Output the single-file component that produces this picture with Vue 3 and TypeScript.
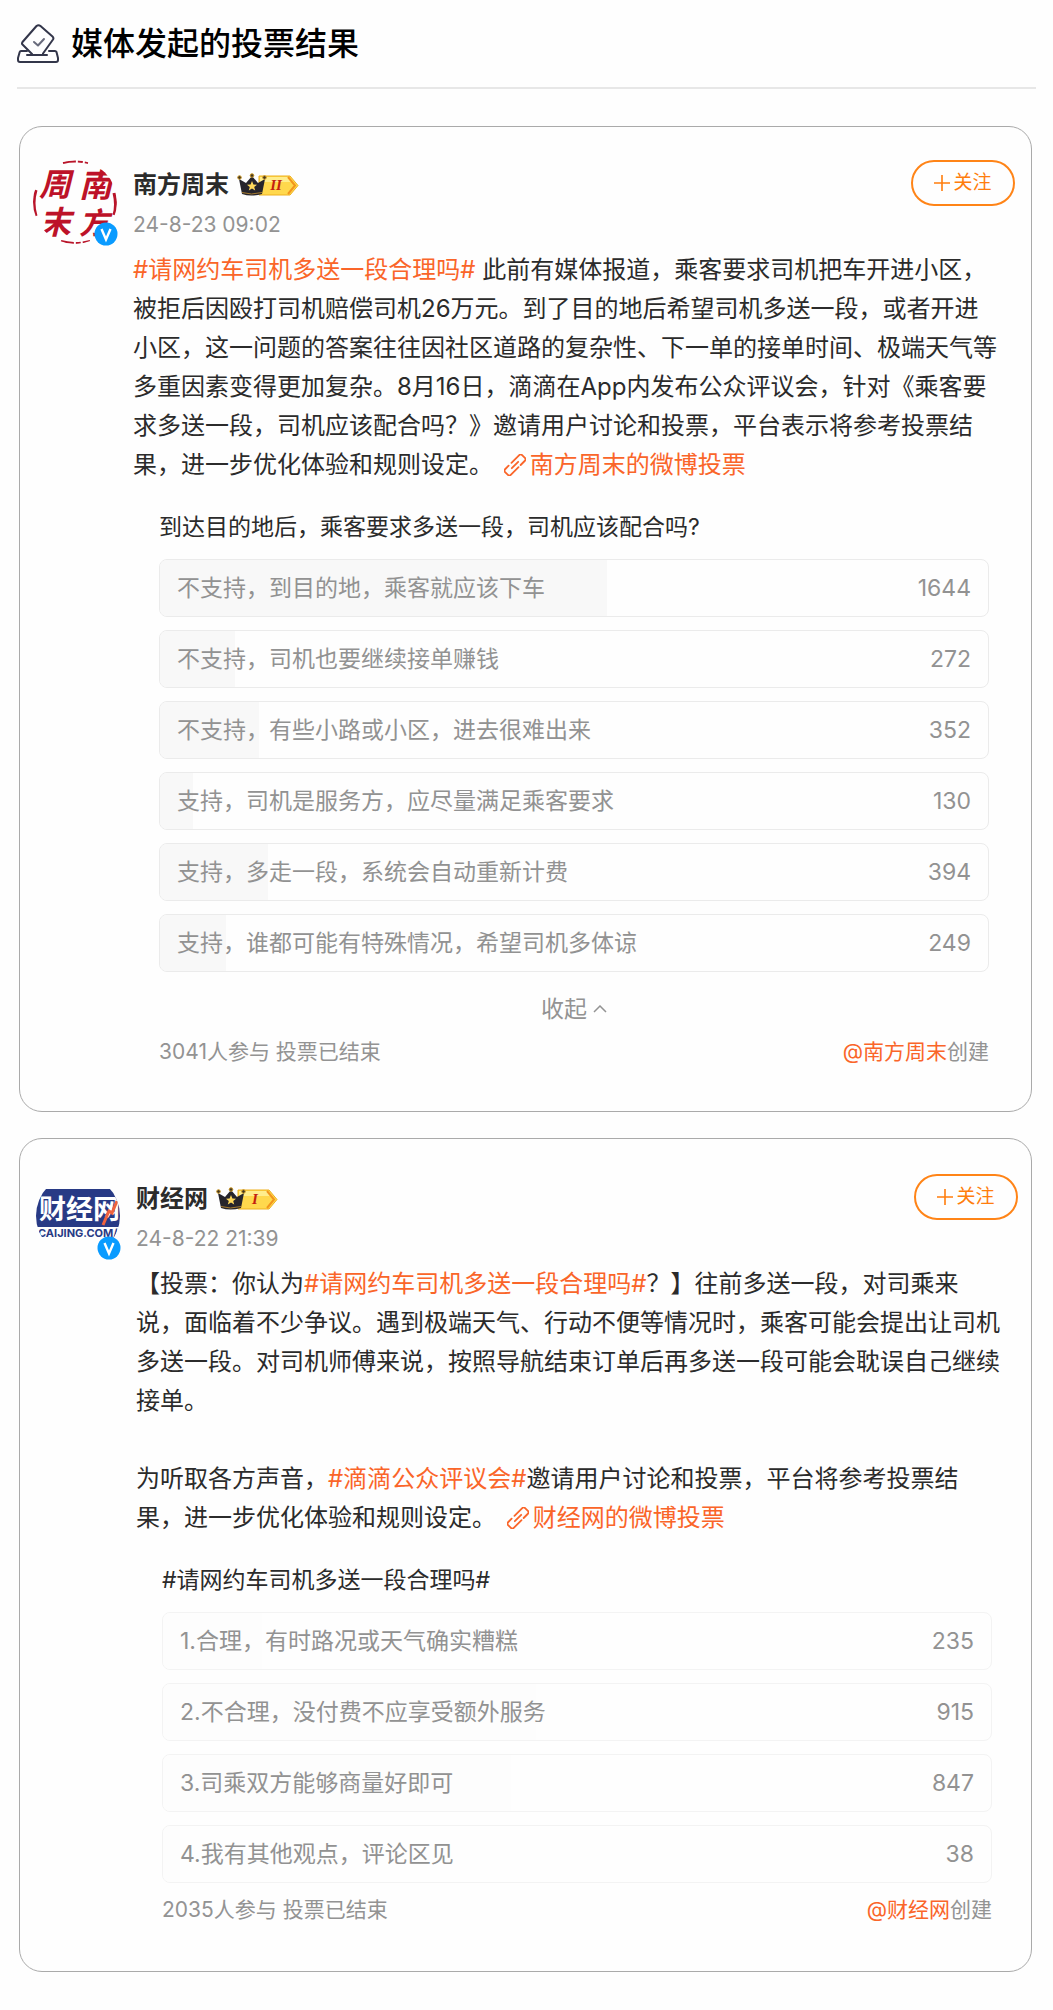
<script setup lang="ts">
interface Segment {
  text: string
  kind?: 'topic' | 'vote'
}
interface Option {
  label: string
  votes: number
}
interface Post {
  id: string
  author: string
  level: string
  time: string
  body: Segment[]
  question: string
  options: Option[]
  total: number
  collapsible: boolean
}

const posts: Post[] = [
  {
    id: 'nfzm',
    author: '南方周末',
    level: 'II',
    time: '24-8-23 09:02',
    body: [
      { text: '#请网约车司机多送一段合理吗#', kind: 'topic' },
      {
        text: ' 此前有媒体报道，乘客要求司机把车开进小区，\n被拒后因殴打司机赔偿司机26万元。到了目的地后希望司机多送一段，或者开进\n小区，这一问题的答案往往因社区道路的复杂性、下一单的接单时间、极端天气等\n多重因素变得更加复杂。8月16日，滴滴在App内发布公众评议会，针对《乘客要\n求多送一段，司机应该配合吗？》邀请用户讨论和投票，平台表示将参考投票结\n果，进一步优化体验和规则设定。 ',
      },
      { text: '南方周末的微博投票', kind: 'vote' },
    ],
    question: '到达目的地后，乘客要求多送一段，司机应该配合吗?',
    options: [
      { label: '不支持，到目的地，乘客就应该下车', votes: 1644 },
      { label: '不支持，司机也要继续接单赚钱', votes: 272 },
      { label: '不支持，有些小路或小区，进去很难出来', votes: 352 },
      { label: '支持，司机是服务方，应尽量满足乘客要求', votes: 130 },
      { label: '支持，多走一段，系统会自动重新计费', votes: 394 },
      { label: '支持，谁都可能有特殊情况，希望司机多体谅', votes: 249 },
    ],
    total: 3041,
    collapsible: true,
  },
  {
    id: 'caijing',
    author: '财经网',
    level: 'I',
    time: '24-8-22 21:39',
    body: [
      { text: '【投票：你认为' },
      { text: '#请网约车司机多送一段合理吗#', kind: 'topic' },
      {
        text: '？】往前多送一段，对司乘来\n说，面临着不少争议。遇到极端天气、行动不便等情况时，乘客可能会提出让司机\n多送一段。对司机师傅来说，按照导航结束订单后再多送一段可能会耽误自己继续\n接单。\n\n为听取各方声音，',
      },
      { text: '#滴滴公众评议会#', kind: 'topic' },
      { text: '邀请用户讨论和投票，平台将参考投票结\n果，进一步优化体验和规则设定。 ' },
      { text: '财经网的微博投票', kind: 'vote' },
    ],
    question: '#请网约车司机多送一段合理吗#',
    options: [
      { label: '1.合理，有时路况或天气确实糟糕', votes: 235 },
      { label: '2.不合理，没付费不应享受额外服务', votes: 915 },
      { label: '3.司乘双方能够商量好即可', votes: 847 },
      { label: '4.我有其他观点，评论区见', votes: 38 },
    ],
    total: 2035,
    collapsible: false,
  },
]

const share = (votes: number, total: number): string => `${Math.round((votes / total) * 100)}%`
</script>

<template>
  <main class="page" lang="zh-CN">
    <header class="page-head">
      <svg class="ballot" viewBox="0 0 42 40" fill="none" stroke="#33364a" stroke-width="2" stroke-linejoin="round" stroke-linecap="round" aria-hidden="true">
        <path d="M10 27H4Q3 27 2.700 28L1 34V36Q1 38 3 38H39Q41 38 41 36V34L39.500 28Q39 27 38 27H32" />
        <path d="M15 30L5.500 20.500Q4.500 19.500 5.500 18L19.500 2Q21.500 0.500 23.500 2L35.500 12.500Q37 14 36 15.500L26 29.500" />
        <path d="M10 31H30" />
        <path d="M17 18L21 21.500L27 15" stroke="#686b7c" />
      </svg>
      <h1>媒体发起的投票结果</h1>
    </header>

    <article v-for="post in posts" :key="post.id" class="card" :class="`card-${post.id}`">
      <div class="avatar">
        <svg v-if="post.id === 'nfzm'" class="portrait" viewBox="0 0 84 84" role="img" aria-label="南方周末">
          <g fill="none" stroke="#b9152a">
            <path d="M30 3Q42 0 55 3M28 81Q42 85 57 81" stroke-width="2" stroke-dasharray="13 2 5 2" />
            <path d="M3 30Q-1 43 3 56M81 33Q84 45 81 55" stroke-width="3" />
          </g>
          <g class="seal">
            <text x="6" y="36" font-size="32">周</text>
            <text x="46" y="37" font-size="33">南</text>
            <text x="6" y="74" font-size="32">末</text>
            <text x="46" y="74" font-size="30">方</text>
          </g>
        </svg>
        <svg v-else class="portrait" viewBox="0 0 84 84" role="img" aria-label="财经网">
          <rect y="15" width="84" height="38" fill="#283a85" />
          <text class="masthead" x="3" y="45">财经网</text>
          <path d="M67 51L73 37L76 39L81 27" fill="none" stroke="#f0623d" stroke-width="3" />
          <text class="domain" x="2" y="63">CAIJING.COM/</text>
        </svg>
        <svg class="verified" viewBox="0 0 24 24" aria-hidden="true">
          <circle cx="12" cy="12" r="11.500" fill="#0a9bff" />
          <path d="M7.500 7L12 17.500L16.500 7" fill="none" stroke="#fff" stroke-width="2.400" />
        </svg>
      </div>

      <div class="content">
        <div class="head">
          <div class="who">
            <div class="name-row">
              <h2>{{ post.author }}</h2>
              <svg class="level" viewBox="0 0 62 24" role="img" :aria-label="`等级 ${post.level}`">
                <path d="M22 3H53L61 12.500L53 22H22Z" fill="#ffd84d" stroke="#eeb01e" />
                <path d="M23 4H52L56 9H23Z" fill="#ffed8c" />
                <path d="M51 4L58 12.500L51 21" fill="none" stroke="#f2951c" stroke-width="2" />
                <path d="M2 6L9 10L15 3L21 10L28 6L25 21Q14 24 5 21Z" fill="#26242b" />
                <path d="M5 19.500Q14 22.500 25 19.500" fill="none" stroke="#a77c30" />
                <g fill="#46391f" stroke="#cb982b">
                  <circle cx="2.500" cy="4.500" r="1.800" />
                  <circle cx="15" cy="2.500" r="1.800" />
                  <circle cx="27.500" cy="4.500" r="1.800" />
                </g>
                <path d="M15 8L16.400 11.500L20 11.700L17.200 14L18.200 17.600L15 15.600L11.800 17.600L12.800 14L10 11.700L13.600 11.500Z" fill="#ffd95c" />
                <text class="rank" x="39" y="17">{{ post.level }}</text>
              </svg>
            </div>
            <time>{{ post.time }}</time>
          </div>
          <button class="follow" type="button">
            <svg viewBox="0 0 16 16" aria-hidden="true"><path d="M8 0V16M0 8H16" stroke="currentColor" stroke-width="1.600" /></svg>
            <span>关注</span>
          </button>
        </div>

        <p class="body"><template v-for="(seg, i) in post.body" :key="i"><a v-if="seg.kind" href="#" :class="seg.kind"><svg v-if="seg.kind === 'vote'" viewBox="0 0 22 22" fill="none" stroke="currentColor" stroke-width="1.800" stroke-linejoin="round" stroke-linecap="round" aria-hidden="true"><g transform="rotate(-45 11 11)"><path d="M10 7H21Q23 7 23 9V13Q23 15 21 15H15" /><path d="M12 15H1Q-1 15 -1 13V9Q-1 7 1 7H6" /><path d="M6.500 11H15.500" /></g></svg>{{ seg.text }}</a><template v-else>{{ seg.text }}</template></template></p>

        <section class="poll">
          <h3>{{ post.question }}</h3>
          <ul>
            <li v-for="option in post.options" :key="option.label">
              <div class="fill" :style="{ width: share(option.votes, post.total) }"></div>
              <span>{{ option.label }}</span>
              <span>{{ option.votes }}</span>
            </li>
          </ul>
          <button v-if="post.collapsible" class="collapse" type="button">
            <span>收起</span>
            <svg viewBox="0 0 14 8" fill="none" stroke="currentColor" stroke-width="1.500" aria-hidden="true"><path d="M1 7L7 1L13 7" /></svg>
          </button>
          <footer>
            <span>{{ post.total }}人参与 投票已结束</span>
            <span><a href="#">@{{ post.author }}</a>创建</span>
          </footer>
        </section>
      </div>
    </article>
  </main>
</template>

<style>
body {
  margin: 0;
  background: #fefefe;
}
</style>

<style scoped>
.page {
  box-sizing: border-box;
  padding: 0 21px 38px 19px;
  font-family: Inter, "Noto Sans CJK SC", sans-serif;
  text-spacing-trim: space-all;
  color: #2b2b2b;
}
h1, h2, h3, p, ul {
  margin: 0;
  padding: 0;
  font-weight: 400;
}
a {
  color: #fa6529;
  text-decoration: none;
}
button {
  font-family: inherit;
  background: none;
  cursor: pointer;
}
.page-head {
  display: flex;
  align-items: center;
  gap: 12px;
  height: 87px;
  margin: 0 -4px 37px -2px;
  border-bottom: 2px solid #e7e7e7;
}
.ballot {
  width: 42px;
  height: 40px;
}
h1 {
  font-size: 32px;
  line-height: 48px;
  font-weight: 500;
  color: #000;
}
.card {
  display: flex;
  gap: 16px;
  padding: 33px 16px 44px 13px;
  border: 1px solid #aaa;
  border-radius: 23px;
}
.card + .card {
  margin-top: 26px;
  padding: 35px 13px 47px 16px;
}
.avatar {
  position: relative;
  flex: none;
  width: 84px;
  height: 84px;
}
.portrait {
  display: block;
  width: 84px;
  height: 84px;
  border-radius: 50%;
}
.seal {
  font-family: "Noto Sans CJK SC", sans-serif;
  font-weight: 700;
  font-style: italic;
  fill: #bd1228;
}
.masthead {
  font-family: "Noto Sans CJK SC", sans-serif;
  font-size: 27px;
  font-weight: 700;
  fill: #fff;
}
.domain {
  font-size: 11px;
  font-weight: 700;
  fill: #283a85;
}
.verified {
  position: absolute;
  right: -1px;
  bottom: -2px;
  width: 24px;
  height: 24px;
}
.content {
  flex: 1;
  min-width: 0;
}
.head {
  display: flex;
  justify-content: space-between;
  align-items: flex-start;
}
.who {
  display: grid;
  gap: 12px;
  padding-top: 11px;
}
.name-row {
  display: flex;
  align-items: center;
  gap: 8px;
}
h2 {
  font-size: 24px;
  line-height: 28px;
  font-weight: 700;
}
.level {
  width: 62px;
  height: 24px;
}
.rank {
  font: italic 700 15px "Liberation Serif", serif;
  text-anchor: middle;
  fill: #c3200f;
}
time {
  font-size: 21px;
  line-height: 28px;
  color: #939393;
}
.follow {
  display: flex;
  align-items: center;
  justify-content: center;
  gap: 3px;
  width: 104px;
  height: 46px;
  padding: 0;
  border: 2px solid #ff8417;
  border-radius: 23px;
  font-size: 19px;
  line-height: 24px;
  color: #ff7d0d;
}
.follow svg {
  width: 16px;
  height: 16px;
}
.body {
  margin-top: 11px;
  font-size: 24px;
  line-height: 39px;
  white-space: pre-line;
}
.vote svg {
  width: 22px;
  height: 22px;
  margin: 0 4px;
  vertical-align: -3px;
}
.poll {
  margin: 27px 26px 0;
}
h3 {
  font-size: 23px;
  line-height: 32px;
}
ul {
  display: grid;
  gap: 13px;
  margin-top: 16px;
  list-style: none;
}
li {
  position: relative;
  display: flex;
  justify-content: space-between;
  align-items: center;
  box-sizing: border-box;
  height: 58px;
  padding: 0 17px;
  overflow: hidden;
  border: 1px solid #ebebeb;
  border-radius: 8px;
  font-size: 23px;
  line-height: 32px;
  color: #929292;
}
li span {
  position: relative;
}
.fill {
  position: absolute;
  top: 0;
  bottom: 0;
  left: 0;
  background: #f8f8f8;
}
.card-caijing li {
  border-color: #f3f3f3;
}
.card-caijing .fill {
  background: #fdfdfd;
}
.collapse {
  display: flex;
  align-items: center;
  gap: 6px;
  margin: 21px auto 0;
  padding: 0;
  border: 0;
  font-size: 23px;
  line-height: 32px;
  color: #939393;
}
.collapse svg {
  width: 14px;
  height: 8px;
}
footer {
  display: flex;
  justify-content: space-between;
  margin-top: 12px;
  font-size: 21px;
  line-height: 30px;
  color: #939393;
}
.card-caijing footer {
  margin-bottom: -1px;
}
</style>
